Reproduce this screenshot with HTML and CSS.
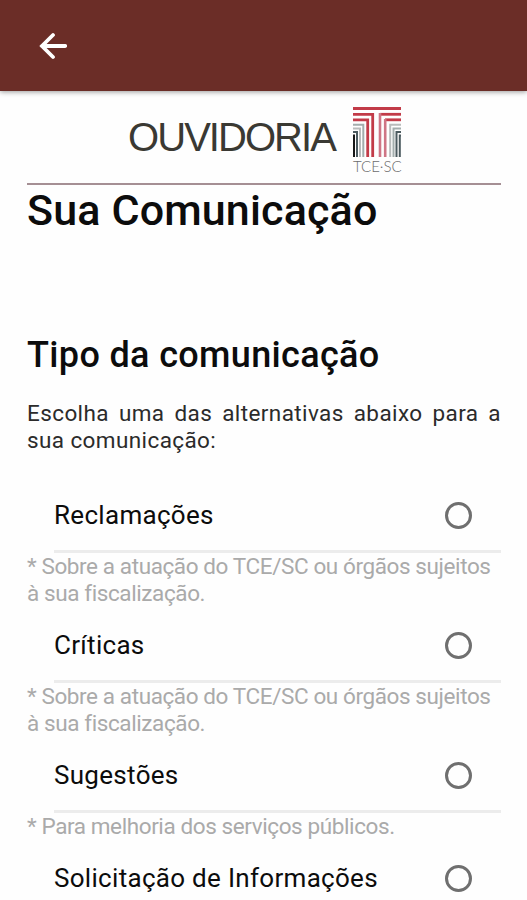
FILE: index.html
```html
<!DOCTYPE html>
<html lang="pt-BR">
  <head>
    <meta charset="UTF-8" />
    <meta name="viewport" content="width=device-width, initial-scale=1.0" />
    <title>Ouvidoria TCE/SC</title>
    <link rel="stylesheet" href="styles.css">
  </head>
  <body>
    <header class="toolbar">
      <button class="back" aria-label="Voltar">
        <svg width="28" height="28" viewBox="0 0 28 28">
          <path d="M26.2 14H3M14 3L3 14l11 11" />
        </svg>
      </button>
    </header>
    <main>
      <div class="brand">
        <span class="brand-name">OUVIDORIA</span>
        <div class="logo">
          <svg width="48" height="50" viewBox="0 0 48 50">
            <path class="red" d="M0 1.500h48" />
            <g>
              <path class="red" d="M0 7.300h19.700V50" />
              <path class="red" d="M0 12.800h14.700V50" />
              <path class="teal" d="M0 17.800h10.300V50" />
              <path class="grey" d="M0 21.500h7V50" />
              <path class="dark" d="M0 25h4V50" />
              <path class="black" d="M0 28.500h1V50" />
            </g>
            <g transform="matrix(-1 0 0 1 48 0)">
              <path class="red" d="M0 7.300h21" />
              <path class="pink" d="M21 6v44" />
              <path class="red" d="M0 12.800h16" />
              <path class="pink" d="M15.800 12v38" />
              <path class="grey" d="M0 17.800h10.800V50" />
              <path class="teal" d="M0 21.500h7.500V50" />
              <path class="dark" d="M0 25h4.500V50" />
              <path class="dark" d="M0 28.500h1.200V50" />
            </g>
          </svg>
          <span class="logo-name">TCE·SC</span>
        </div>
      </div>
      <h1>Sua Comunicação</h1>
      <h2>Tipo da comunicação</h2>
      <p class="intro">Escolha uma das alternativas abaixo para a sua comunicação:</p>
      <form>
        <label class="option">
          <span>Reclamações</span>
          <input type="radio" name="tipo" />
        </label>
        <p class="note">* Sobre a atuação do TCE/SC ou órgãos sujeitos à sua fiscalização.</p>
        <label class="option">
          <span>Críticas</span>
          <input type="radio" name="tipo" />
        </label>
        <p class="note">* Sobre a atuação do TCE/SC ou órgãos sujeitos à sua fiscalização.</p>
        <label class="option">
          <span>Sugestões</span>
          <input type="radio" name="tipo" />
        </label>
        <p class="note">* Para melhoria dos serviços públicos.</p>
        <label class="option">
          <span>Solicitação de Informações</span>
          <input type="radio" name="tipo" />
        </label>
      </form>
    </main>
  </body>
</html>
```

FILE: styles.css
```css
* {
  box-sizing: border-box;
}

html,
body {
  height: 100%;
}

body {
  margin: 0;
  overflow: hidden;
  background-color: #fefefe;
  color: #0c0c0c;
  font-family: Roboto, sans-serif;
}

h1,
h2,
p {
  margin: 0;
}

.toolbar {
  display: flex;
  align-items: center;
  height: 91px;
  padding-left: 39px;
  background-color: #6b2d27;
  box-shadow: 0 1px 5px rgba(0, 0, 0, 0.4);
}

.back {
  display: flex;
  padding: 0;
  border: none;
  background: none;
}

.back path {
  fill: none;
  stroke: white;
  stroke-width: 3.8;
  stroke-linecap: round;
}

main {
  padding: 0 26px 0 27px;
}

.brand {
  display: flex;
  justify-content: center;
  gap: 18px;
  height: 94px;
  padding-top: 16px;
  padding-left: 1px;
  border-bottom: 2px solid #a58f94;
}

.brand-name {
  color: #3a3933;
  font-family: "Liberation Sans", Arial, sans-serif;
  font-size: 40px;
  line-height: 61px;
  letter-spacing: -1.95px;
}

.logo {
  display: flex;
  flex-direction: column;
  width: 48px;
}

.logo path {
  fill: none;
  stroke-width: 2;
}

.logo .red {
  stroke: #c23b48;
  stroke-width: 2.8;
}

.logo .pink {
  stroke: #cf7585;
  stroke-width: 2.6;
}

.logo .teal {
  stroke: #a3adad;
}

.logo .grey {
  stroke: #b9bcbc;
}

.logo .dark {
  stroke: #4c5b60;
}

.logo .black {
  stroke: #171717;
}

.logo-name {
  color: #6c6c6c;
  font-family: Lato, sans-serif;
  font-size: 15px;
  font-weight: 300;
  line-height: 18px;
  white-space: nowrap;
}

h1 {
  height: 143px;
  font-size: 43px;
  font-weight: 500;
  line-height: 50px;
  letter-spacing: 0.15px;
}

h2 {
  height: 72px;
  font-size: 36px;
  font-weight: 500;
  line-height: 54px;
  letter-spacing: 0.35px;
}

.intro {
  height: 77px;
  color: #2b2b2b;
  font-size: 22.5px;
  line-height: 27px;
  text-align: justify;
  letter-spacing: 0.4px;
}

.option {
  display: flex;
  align-items: center;
  justify-content: space-between;
  height: 76px;
  margin-left: 27px;
  padding: 3px 29px 0 0;
  border-bottom: 3px solid #ececec;
  font-size: 26px;
  line-height: 32px;
  letter-spacing: 0.3px;
}

.option input {
  appearance: none;
  width: 27px;
  height: 27px;
  margin: 0;
  border: 3px solid #6f6f6f;
  border-radius: 50%;
}

.note {
  color: #aaaaaa;
  font-size: 22.5px;
  line-height: 27px;
  letter-spacing: -0.4px;
}
```
